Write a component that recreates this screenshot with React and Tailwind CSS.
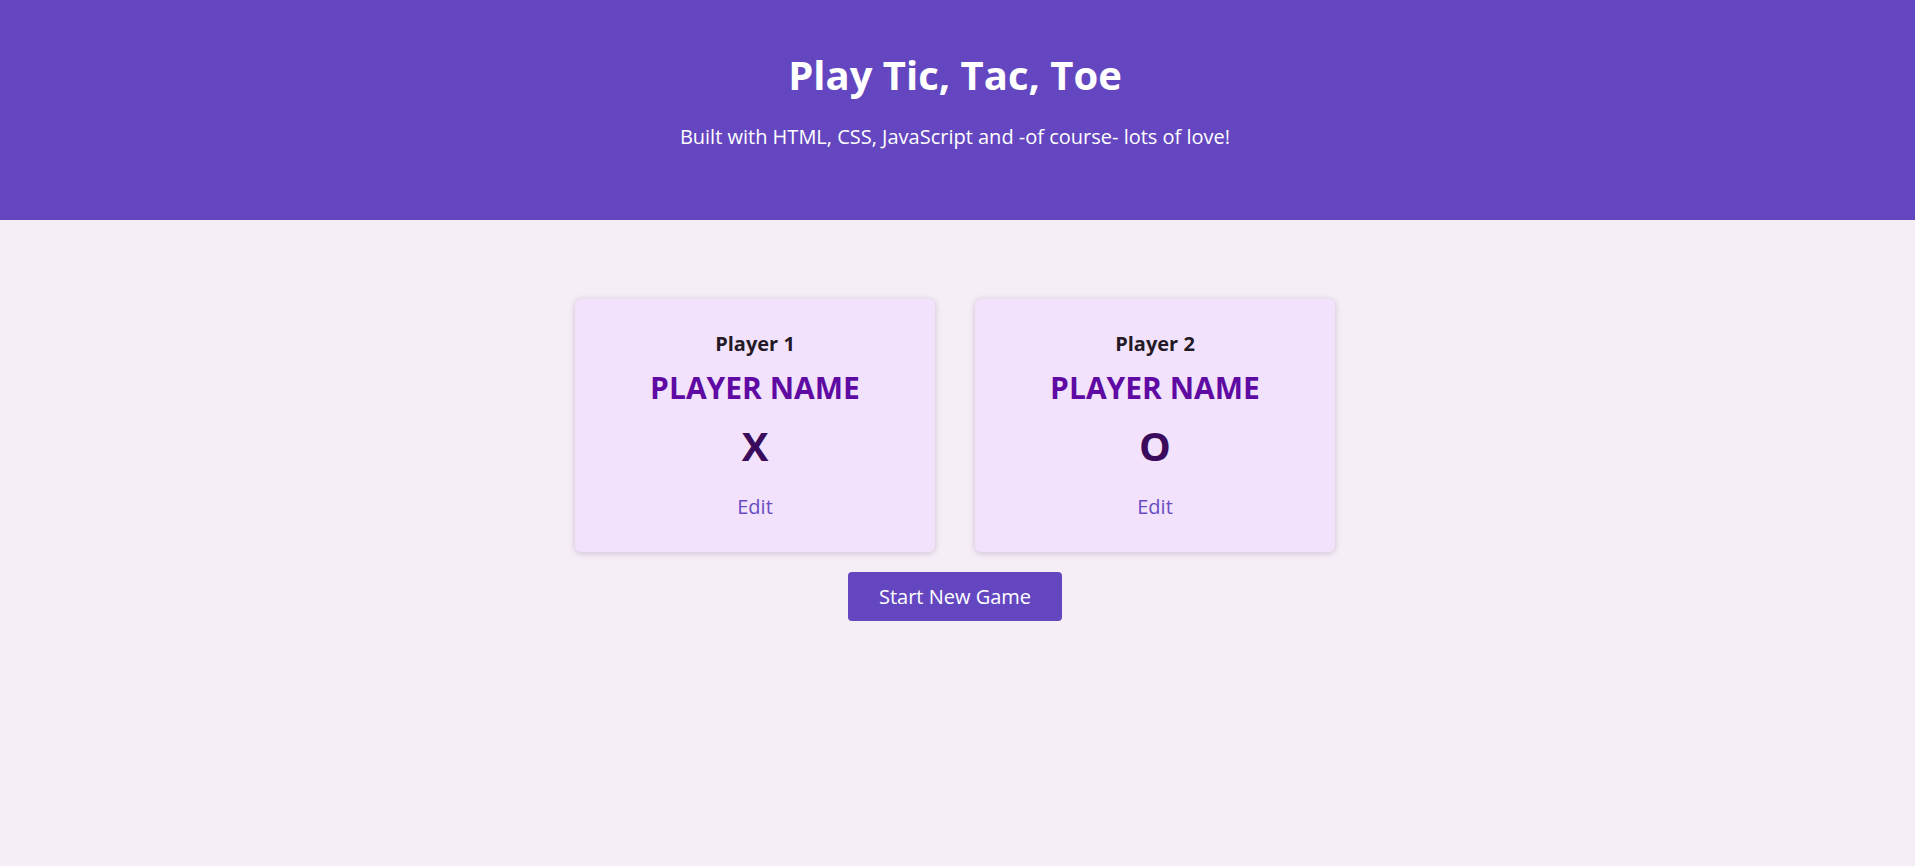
import React from "react";

const players = [
  { label: "Player 1", name: "PLAYER NAME", symbol: "X" },
  { label: "Player 2", name: "PLAYER NAME", symbol: "O" },
];

function PlayerCard({ label, name, symbol }) {
  return (
    <li className="w-[360px] rounded-md bg-[#f2e2fc] pt-[30px] pb-[30px] text-center shadow-[0_1px_6px_rgba(60,20,90,0.22)]">
      <h2 className="text-[20px] leading-[30px] font-bold text-[#231a26]">{label}</h2>
      <h3 className="mt-[6px] text-[30px] leading-[45px] font-bold text-[#5f0aa3]">{name}</h3>
      <p className="mt-[6px] text-[40px] leading-[60px] font-bold text-[#3a0b5c]">{symbol}</p>
      <button className="mt-[16px] text-[20px] leading-[30px] text-[#6a4bc4] bg-transparent">
        Edit
      </button>
    </li>
  );
}

export default function App() {
  return (
    <div className="min-h-screen bg-[#f5eef6] font-['Open_Sans',sans-serif]">
      <header className="h-[220px] bg-[#6447c0] text-white text-center pt-[45px] pr-[5px]">
        <h1 className="text-[40px] leading-[60px] font-bold">Play Tic, Tac, Toe</h1>
        <p className="mt-[17px] text-[20px] leading-[30px]">
          Built with HTML, CSS, JavaScript and -of course- lots of love!
        </p>
      </header>

      <main className="pt-[79px] pr-[5px] flex flex-col items-center">
        <ol className="flex gap-[40px] list-none">
          {players.map((p) => (
            <PlayerCard key={p.label} {...p} />
          ))}
        </ol>
        <button className="mt-[20px] h-[49px] w-[214px] rounded-[4px] bg-[#6447c0] text-white text-[20px] leading-[30px]">
          Start New Game
        </button>
      </main>
    </div>
  );
}
